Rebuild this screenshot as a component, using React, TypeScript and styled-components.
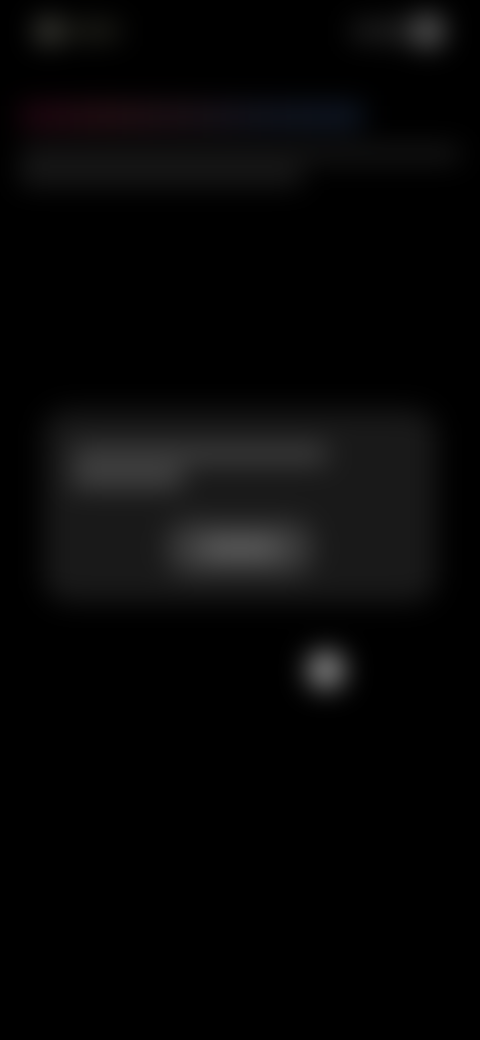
import React from "react";
import styled, { createGlobalStyle } from "styled-components";

const GlobalStyle = createGlobalStyle`
  * { box-sizing: border-box; }
  html { background: #000; }
  body { margin: 0; background: #000; font-family: "Liberation Sans", sans-serif; }
`;

const Page = styled.div`
  min-height: 100vh;
  overflow: hidden;
  background: #000;
`;

const Content = styled.div`
  display: flex;
  flex-direction: column;
  filter: blur(14px);
`;

const Header = styled.header`
  display: flex;
  justify-content: space-between;
  align-items: center;
  height: 62px;
  padding: 0 36px;
`;

const Group = styled.div`
  display: flex;
  align-items: center;
  gap: 4px;
`;

const Bar = styled.div<{ $width: string; $height: number; $color: string }>`
  width: ${(p) => p.$width};
  height: ${(p) => p.$height}px;
  background: ${(p) => p.$color};
  border-radius: 4px;
`;

const Dot = styled.div<{ $size: number; $color: string }>`
  width: ${(p) => p.$size}px;
  height: ${(p) => p.$size}px;
  border-radius: 50%;
  background: ${(p) => p.$color};
`;

const Intro = styled.section`
  display: flex;
  flex-direction: column;
  gap: 8px;
  padding: 42px 20px 0;
`;

const Title = styled.div`
  width: 78%;
  height: 24px;
  margin-bottom: 12px;
  background: linear-gradient(90deg, #240612, #2a1218 25%, #20151c 50%, #151824 70%, #101a2a);
`;

const Card = styled.section`
  display: flex;
  flex-direction: column;
  gap: 8px;
  margin: 226px 44px 0;
  padding: 36px 28px 28px;
  border-radius: 24px;
  background: #191919;
`;

const CardButton = styled.button`
  display: flex;
  align-items: center;
  justify-content: center;
  align-self: center;
  width: 144px;
  height: 52px;
  margin-top: 28px;
  padding: 0;
  border: 0;
  border-radius: 20px;
  background: #3c3c3c;
`;

const PointerRow = styled.div`
  display: flex;
  justify-content: flex-end;
  margin-top: 50px;
  padding-right: 136px;
`;

export default function App() {
  return (
    <Page>
      <GlobalStyle />
      <Content>
        <Header>
          <Group>
            <Dot $size={24} $color="#595950" />
            <Bar $width="56px" $height={16} $color="#26261f" />
          </Group>
          <Group>
            <Bar $width="28px" $height={16} $color="#2b2b2b" />
            <Bar $width="24px" $height={20} $color="#2e2e2e" />
            <Dot $size={32} $color="#666666" />
          </Group>
        </Header>
        <Intro>
          <Title />
          <Bar $width="100%" $height={12} $color="#222222" />
          <Bar $width="64%" $height={16} $color="#202020" />
        </Intro>
        <Card>
          <Bar $width="76%" $height={16} $color="#4a4a4a" />
          <Bar $width="33%" $height={16} $color="#525252" />
          <CardButton type="button" aria-label="Continue">
            <Bar $width="76px" $height={16} $color="#6a6a6a" />
          </CardButton>
        </Card>
        <PointerRow>
          <Dot $size={36} $color="#9c9c9c" />
        </PointerRow>
      </Content>
    </Page>
  );
}
